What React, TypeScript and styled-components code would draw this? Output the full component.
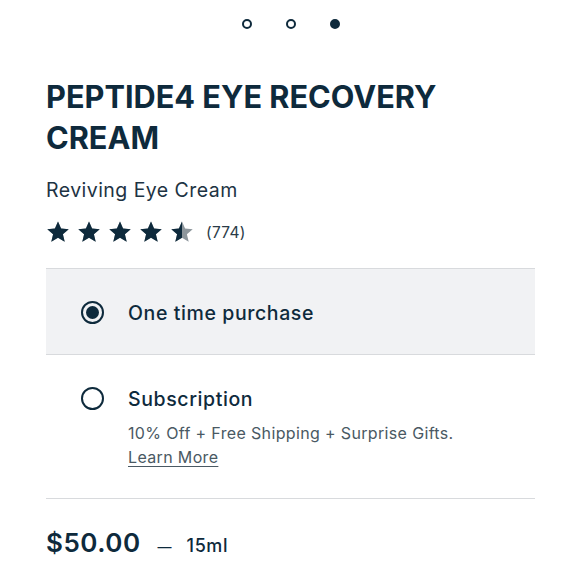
import React, { FC } from 'react';
import styled, { createGlobalStyle } from 'styled-components';

const GlobalStyle = createGlobalStyle`
  html, body {
    margin: 0;
    padding: 0;
    background: #ffffff;
  }
  body {
    font-family: Inter, 'Noto Sans', 'Liberation Sans', sans-serif;
    color: #0e2a3c;
  }
`;

const Page = styled.div`
  width: 580px;
  height: 580px;
  overflow: hidden;
  display: flex;
  flex-direction: column;
  padding: 0 45px 0 46px;
  box-sizing: border-box;
`;

const Dots = styled.div`
  display: flex;
  flex-direction: row;
  justify-content: center;
  gap: 34px;
  padding: 19px 0 0 0;
`;

const Dot = styled.span<{ $active?: boolean }>`
  width: 10px;
  height: 10px;
  box-sizing: border-box;
  border-radius: 50%;
  border: 2px solid #0e2a3c;
  background: ${(p) => (p.$active ? '#0e2a3c' : 'transparent')};
`;

const Title = styled.h1`
  margin: 47px 0 0 0;
  font-size: 30.7px;
  line-height: 41px;
  font-weight: 700;
  letter-spacing: 0;
  color: #0e2a3c;
`;

const Subtitle = styled.div`
  margin-top: 20px;
  font-size: 19.5px;
  line-height: 24px;
  letter-spacing: 0.45px;
  color: #1d3343;
`;

const Rating = styled.div`
  display: flex;
  flex-direction: row;
  align-items: center;
  margin-top: 18px;
  gap: 7px;
`;

const Stars = styled.div`
  display: flex;
  flex-direction: row;
  gap: 7px;
`;

const Count = styled.span`
  margin-left: 5px;
  font-size: 15.5px;
  letter-spacing: 0.3px;
  color: #2a3b47;
`;

const Options = styled.div`
  margin-top: 24px;
  border-top: 1px solid #d8dadd;
  display: flex;
  flex-direction: column;
`;

const Option = styled.div<{ $selected?: boolean }>`
  display: flex;
  flex-direction: row;
  align-items: flex-start;
  gap: 24px;
  padding: ${(p) => (p.$selected ? '33px 34px 30px 35px' : '33px 34px 29px 35px')};
  background: ${(p) => (p.$selected ? '#f1f2f4' : '#ffffff')};
  border-bottom: 1px solid #d8dadd;
`;

const Radio = styled.span<{ $checked?: boolean }>`
  flex: 0 0 auto;
  width: 23px;
  height: 23px;
  box-sizing: border-box;
  border-radius: 50%;
  border: 2px solid #0e2a3c;
  display: flex;
  align-items: center;
  justify-content: center;
  margin-top: -1px;

  &::after {
    content: '';
    display: ${(p) => (p.$checked ? 'block' : 'none')};
    width: 13px;
    height: 13px;
    border-radius: 50%;
    background: #0e2a3c;
  }
`;

const OptionBody = styled.div`
  display: flex;
  flex-direction: column;
`;

const OptionLabel = styled.div`
  font-size: 19.5px;
  line-height: 22px;
  font-weight: 500;
  letter-spacing: 0.6px;
  color: #0e2a3c;
`;

const OptionNote = styled.div`
  margin-top: 11px;
  font-size: 16px;
  line-height: 24px;
  letter-spacing: 0.35px;
  color: #4a5963;
`;

const LearnMore = styled.a`
  color: #4a5963;
  text-decoration: underline;
  text-underline-offset: 3px;
`;

const PriceRow = styled.div`
  display: flex;
  flex-direction: row;
  align-items: baseline;
  margin-top: 28px;
`;

const Price = styled.span`
  font-size: 26px;
  font-weight: 600;
  letter-spacing: 0.5px;
  color: #0e2a3c;
`;

const Dash = styled.span`
  margin: 0 15px 0 17px;
  font-size: 14px;
  color: #0e2a3c;
`;

const Size = styled.span`
  font-size: 18px;
  font-weight: 500;
  letter-spacing: 0.6px;
  color: #0e2a3c;
`;

const STAR = 'M12 1.5l3.1 7.1 7.6.6-5.8 5 1.8 7.5L12 17.7l-6.7 4 1.8-7.5-5.8-5 7.6-.6z';

const Star: FC<{ fill: number }> = ({ fill }) => (
  <svg width="24" height="24" viewBox="0 0 24 24">
    <defs>
      <clipPath id={`half-${fill}`}>
        <rect x="0" y="0" width={24 * fill} height="24" />
      </clipPath>
    </defs>
    <path d={STAR} fill="#8d969c" />
    <path d={STAR} fill="#0e2a3c" clipPath={`url(#half-${fill})`} />
  </svg>
);

export default function App() {
  return (
    <>
      <GlobalStyle />
      <Page>
        <Dots>
          <Dot />
          <Dot />
          <Dot $active />
        </Dots>
        <Title>
          PEPTIDE4 EYE RECOVERY
          <br />
          CREAM
        </Title>
        <Subtitle>Reviving Eye Cream</Subtitle>
        <Rating>
          <Stars>
            <Star fill={1} />
            <Star fill={1} />
            <Star fill={1} />
            <Star fill={1} />
            <Star fill={0.5} />
          </Stars>
          <Count>(774)</Count>
        </Rating>
        <Options>
          <Option $selected>
            <Radio $checked />
            <OptionBody>
              <OptionLabel>One time purchase</OptionLabel>
            </OptionBody>
          </Option>
          <Option>
            <Radio />
            <OptionBody>
              <OptionLabel>Subscription</OptionLabel>
              <OptionNote>
                10% Off + Free Shipping + Surprise Gifts.
                <br />
                <LearnMore>Learn More</LearnMore>
              </OptionNote>
            </OptionBody>
          </Option>
        </Options>
        <PriceRow>
          <Price>$50.00</Price>
          <Dash>—</Dash>
          <Size>15ml</Size>
        </PriceRow>
      </Page>
    </>
  );
}
